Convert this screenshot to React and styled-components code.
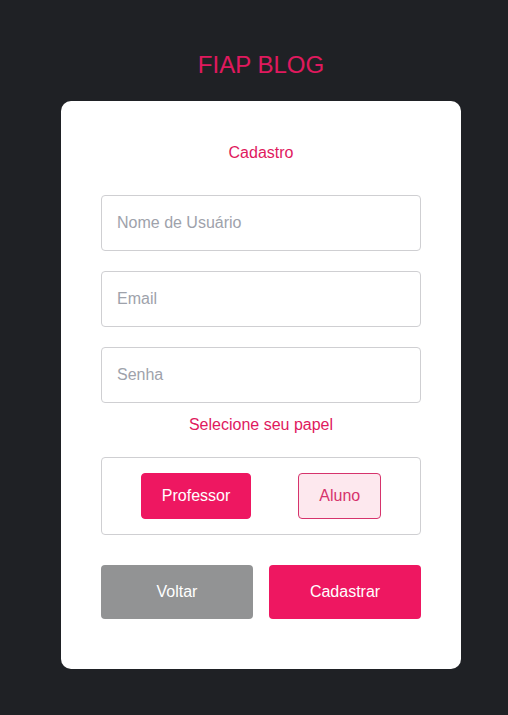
import React, { useState } from "react";
import styled, { createGlobalStyle } from "styled-components";

const GlobalStyle = createGlobalStyle`
  * { box-sizing: border-box; }
  html, body {
    margin: 0;
    background: #1f2125;
    font-family: "Liberation Sans", Arial, sans-serif;
  }
`;

const Page = styled.main`
  min-height: 715px;
  display: flex;
  flex-direction: column;
  align-items: center;
  padding: 51px 0 0 14px;
`;

const Title = styled.h1`
  margin: 0 0 22px;
  font-size: 24px;
  line-height: 28px;
  font-weight: 400;
  color: #e0195e;
`;

const Card = styled.section`
  width: 400px;
  background: #fff;
  border-radius: 10px;
  padding: 43px 40px 50px;
  display: flex;
  flex-direction: column;
`;

const Heading = styled.h2`
  margin: 0 0 33px;
  font-size: 16px;
  line-height: 18px;
  font-weight: 400;
  text-align: center;
  color: #e0195e;
`;

const Fields = styled.div`
  display: flex;
  flex-direction: column;
  gap: 20px;
`;

const Input = styled.input`
  height: 56px;
  width: 100%;
  border: 1px solid #cfcfd2;
  border-radius: 4px;
  padding: 0 15px;
  font-size: 16px;
  font-family: inherit;
  color: #333;
  outline: none;
  &::placeholder { color: #9ea2ab; }
`;

const Label = styled.p`
  margin: 13px 0 23px;
  font-size: 16px;
  line-height: 18px;
  text-align: center;
  color: #e0195e;
`;

const RoleBox = styled.div`
  border: 1px solid #cfcfd2;
  border-radius: 4px;
  padding: 15px 0;
  display: flex;
  justify-content: center;
  gap: 47px;
`;

const RoleButton = styled.button`
  height: 46px;
  padding: 0 20px;
  border-radius: 4px;
  font-size: 16px;
  font-family: inherit;
  cursor: pointer;
  border: 1px solid ${(p) => (p.$active ? "#ee1761" : "#d6336c")};
  background: ${(p) => (p.$active ? "#ee1761" : "#fde8ee")};
  color: ${(p) => (p.$active ? "#fff" : "#d6336c")};
`;

const Actions = styled.div`
  margin-top: 30px;
  display: grid;
  grid-template-columns: 1fr 1fr;
  gap: 16px;
`;

const ActionButton = styled.button`
  height: 54px;
  border: none;
  border-radius: 4px;
  font-size: 16px;
  font-family: inherit;
  color: #fff;
  cursor: pointer;
  background: ${(p) => (p.$primary ? "#ee1761" : "#929394")};
`;

export default function App() {
  const [role, setRole] = useState("professor");
  return (
    <>
      <GlobalStyle />
      <Page>
        <Title>FIAP BLOG</Title>
        <Card>
          <Heading>Cadastro</Heading>
          <Fields>
            <Input placeholder="Nome de Usuário" />
            <Input placeholder="Email" type="email" />
            <Input placeholder="Senha" type="password" />
          </Fields>
          <Label>Selecione seu papel</Label>
          <RoleBox>
            <RoleButton $active={role === "professor"} onClick={() => setRole("professor")}>
              Professor
            </RoleButton>
            <RoleButton $active={role === "aluno"} onClick={() => setRole("aluno")}>
              Aluno
            </RoleButton>
          </RoleBox>
          <Actions>
            <ActionButton>Voltar</ActionButton>
            <ActionButton $primary>Cadastrar</ActionButton>
          </Actions>
        </Card>
      </Page>
    </>
  );
}
